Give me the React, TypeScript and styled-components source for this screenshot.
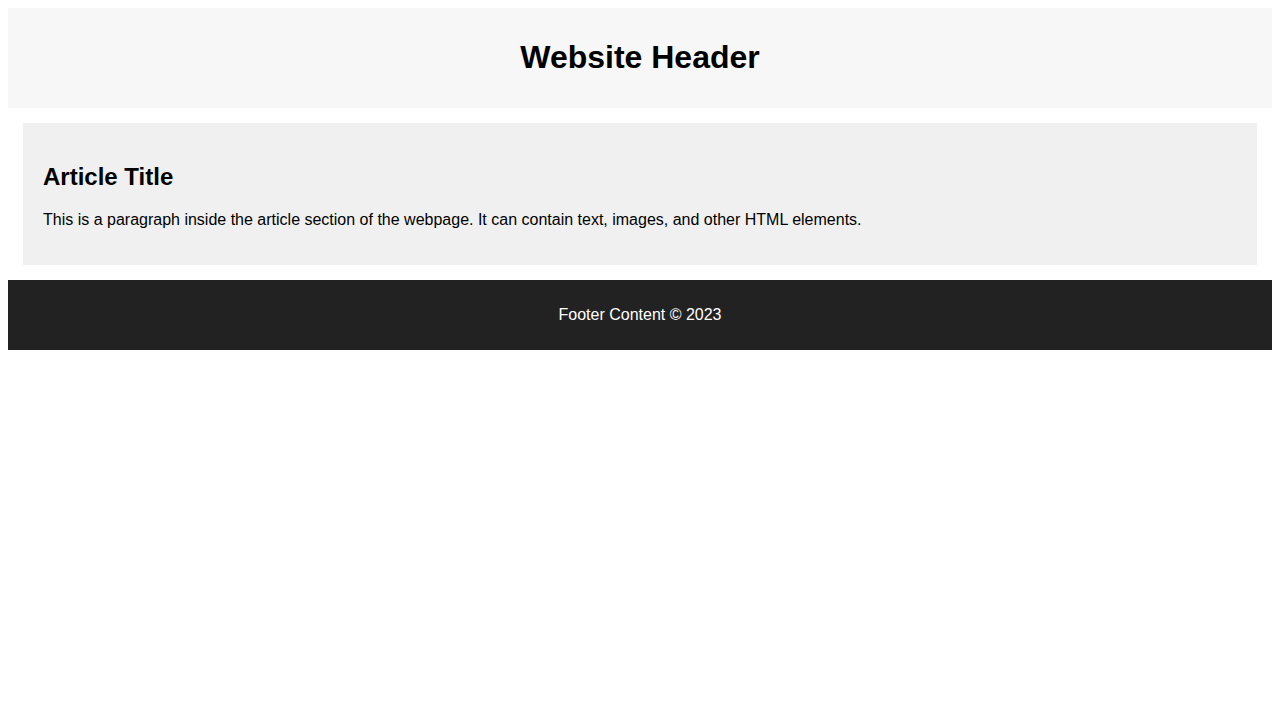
import React from 'react';
import styled, { createGlobalStyle } from 'styled-components';

const GlobalStyle = createGlobalStyle`
  body {
    margin: 8px;
    font-family: 'Liberation Sans', Arial, sans-serif;
    color: #000;
    background: #fff;
  }
`;

const Header = styled.header`
  padding: 10px;
  background-color: #f7f7f7;
  text-align: center;

  h1 {
    margin: 0.67em 0;
    font-size: 32px;
  }
`;

const Main = styled.main`
  padding: 15px;
`;

const Article = styled.article`
  padding: 20px;
  background-color: #f0f0f0;

  h2 {
    margin: 0.83em 0;
    font-size: 24px;
  }

  p {
    margin: 16px 0;
    font-size: 16px;
  }
`;

const Footer = styled.footer`
  padding: 10px;
  background-color: #222222;
  color: #ffffff;
  text-align: center;

  p {
    margin: 16px 0;
  }
`;

const App = () => (
  <>
    <GlobalStyle />
    <Header>
      <h1>Website Header</h1>
    </Header>
    <Main>
      <Article>
        <h2>Article Title</h2>
        <p>
          This is a paragraph inside the article section of the webpage. It can contain text,
          images, and other HTML elements.
        </p>
      </Article>
    </Main>
    <Footer>
      <p>Footer Content © 2023</p>
    </Footer>
  </>
);

export default App;
